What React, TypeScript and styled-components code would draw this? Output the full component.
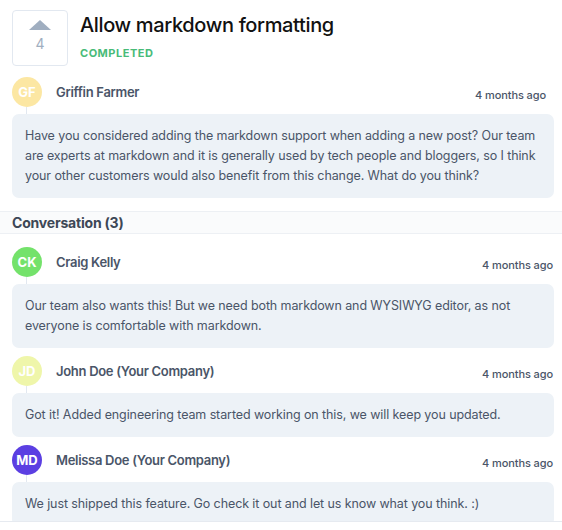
import React from "react";
import styled, { createGlobalStyle } from "styled-components";

const GlobalStyle = createGlobalStyle`
  html, body {
    margin: 0;
    padding: 0;
    background: #ffffff;
  }
  body {
    font-family: "Inter", "Noto Sans", sans-serif;
    color: #4a5568;
  }
`;

type Entry = {
  initials: string;
  name: string;
  color: string;
  time: string;
  body: string;
};

const post: Entry = {
  initials: "GF",
  name: "Griffin Farmer",
  color: "#fce7a3",
  time: "4 months ago",
  body: "Have you considered adding the markdown support when adding a new post? Our team are experts at markdown and it is generally used by tech people and bloggers, so I think your other customers would also benefit from this change. What do you think?",
};

const replies: Entry[] = [
  {
    initials: "CK",
    name: "Craig Kelly",
    color: "#74e26b",
    time: "4 months ago",
    body: "Our team also wants this! But we need both markdown and WYSIWYG editor, as not everyone is comfortable with markdown.",
  },
  {
    initials: "JD",
    name: "John Doe (Your Company)",
    color: "#eff6aa",
    time: "4 months ago",
    body: "Got it! Added engineering team started working on this, we will keep you updated.",
  },
  {
    initials: "MD",
    name: "Melissa Doe (Your Company)",
    color: "#5b3fe2",
    time: "4 months ago",
    body: "We just shipped this feature. Go check it out and let us know what you think. :)",
  },
];

function Comment({ entry, inset }: { entry: Entry; inset?: boolean }) {
  return (
    <Item>
      <AuthorRow>
        <Avatar $bg={entry.color}>{entry.initials}</Avatar>
        <Name>{entry.name}</Name>
        <Time $inset={inset}>{entry.time}</Time>
      </AuthorRow>
      <Connector />
      <Bubble>{entry.body}</Bubble>
    </Item>
  );
}

export default function App() {
  return (
    <>
      <GlobalStyle />
      <Frame>
        <Scroll>
          <Header>
            <VoteBox>
              <Arrow />
              <Count>4</Count>
            </VoteBox>
            <TitleBlock>
              <Title>Allow markdown formatting</Title>
              <Status>Completed</Status>
            </TitleBlock>
          </Header>
          <PostSection>
            <Comment entry={post} inset />
          </PostSection>
          <SectionTitle>Conversation ({replies.length})</SectionTitle>
          <Thread>
            {replies.map((r) => (
              <Comment key={r.initials} entry={r} />
            ))}
          </Thread>
        </Scroll>
        <Footer />
      </Frame>
    </>
  );
}

const Frame = styled.div`
  height: 530px;
  display: flex;
  flex-direction: column;
  overflow: hidden;
`;

const Scroll = styled.div`
  height: 521px;
  overflow: hidden;
  flex-shrink: 0;
`;

const Footer = styled.div`
  flex: 1;
  border-top: 1px solid #e6eaf0;
  background: #ffffff;
`;

const Header = styled.div`
  display: flex;
  gap: 12px;
  padding: 10px 8px 0 12px;
`;

const VoteBox = styled.div`
  width: 56px;
  height: 56px;
  box-sizing: border-box;
  border: 1px solid #e2e8f0;
  border-radius: 4px;
  display: flex;
  flex-direction: column;
  align-items: center;
  padding-top: 9px;
`;

const Arrow = styled.div`
  width: 0;
  height: 0;
  border-left: 11px solid transparent;
  border-right: 11px solid transparent;
  border-bottom: 10px solid #a0aec0;
`;

const Count = styled.div`
  margin-top: 6px;
  font-size: 14px;
  line-height: 16px;
  color: #a0aec0;
`;

const TitleBlock = styled.div`
  display: flex;
  flex-direction: column;
  padding-top: 2px;
`;

const Title = styled.h1`
  margin: 0;
  font-size: 20px;
  line-height: 26px;
  font-weight: 500;
  letter-spacing: -0.35px;
  color: #111111;
`;

const Status = styled.div`
  margin-top: 8px;
  font-size: 11px;
  font-weight: 700;
  letter-spacing: 0.5px;
  text-transform: uppercase;
  color: #48bb78;
`;

const PostSection = styled.div`
  padding: 11px 8px 13px 12px;
`;

const Thread = styled.div`
  display: flex;
  flex-direction: column;
  gap: 8px;
  padding: 13px 8px 0 12px;
`;

const Item = styled.div`
  display: flex;
  flex-direction: column;
`;

const AuthorRow = styled.div`
  display: flex;
  align-items: center;
  height: 30px;
`;

const Avatar = styled.div<{ $bg: string }>`
  width: 30px;
  height: 30px;
  border-radius: 50%;
  background: ${(p) => p.$bg};
  color: #ffffff;
  font-size: 13px;
  font-weight: 700;
  display: flex;
  align-items: center;
  justify-content: center;
  flex-shrink: 0;
`;

const Name = styled.div`
  margin-left: 14px;
  font-size: 13px;
  font-weight: 600;
  letter-spacing: -0.3px;
  color: #4a5568;
`;

const Time = styled.div<{ $inset?: boolean }>`
  margin-left: auto;
  margin-right: ${(p) => (p.$inset ? "8px" : "1px")};
  padding-top: 6px;
  font-size: 11px;
  line-height: 14px;
  font-weight: 500;
  letter-spacing: -0.1px;
  color: #4a5568;
`;

const Connector = styled.div`
  height: 7px;
  margin-left: 14px;
  border-left: 1px solid #e2e8f0;
`;

const Bubble = styled.div`
  background: #edf2f7;
  border-radius: 7px;
  padding: 12px 13px;
  font-size: 12.5px;
  line-height: 20px;
  letter-spacing: -0.1px;
  color: #4a5568;
`;

const SectionTitle = styled.div`
  height: 21px;
  display: flex;
  align-items: center;
  padding: 0 12px;
  background: #fafbfc;
  border-top: 1px solid #edf0f4;
  border-bottom: 1px solid #edf0f4;
  font-size: 14px;
  font-weight: 700;
  letter-spacing: -0.2px;
  color: #3d4756;
`;
